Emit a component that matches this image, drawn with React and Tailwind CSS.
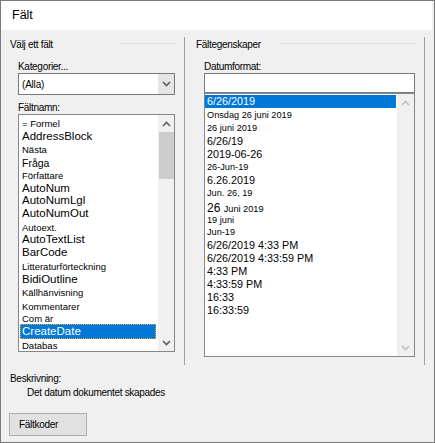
import React from "react";

const font = { fontFamily: '"Liberation Sans", Arial, sans-serif' };

const leftItems = [
  { t: "= Formel", h: 13, s: "s" },
  { t: "AddressBlock", h: 13, s: "L" },
  { t: "Nästa", h: 14, s: "s" },
  { t: "Fråga", h: 12, s: "m" },
  { t: "Författare", h: 13, s: "s" },
  { t: "AutoNum", h: 13, s: "L" },
  { t: "AutoNumLgl", h: 12, s: "L" },
  { t: "AutoNumOut", h: 14, s: "L" },
  { t: "Autoext.", h: 13, s: "s" },
  { t: "AutoTextList", h: 12, s: "L" },
  { t: "BarCode", h: 14, s: "L" },
  { t: "Litteraturförteckning", h: 13, s: "s" },
  { t: "BidiOutline", h: 13, s: "L" },
  { t: "Källhänvisning", h: 14, s: "s" },
  { t: "Kommentarer", h: 13, s: "s" },
  { t: "Com är", h: 11, s: "s" },
  { t: "CreateDate", h: 15, s: "L", sel: true },
  { t: "Databas", h: 14, s: "s" },
];

const rightItems = [
  { t: "6/26/2019", h: 13, s: "L", sel: true },
  { t: "Onsdag 26 juni 2019", h: 15, s: "s" },
  { t: "26 juni 2019", h: 12, s: "s" },
  { t: "6/26/19", h: 12, s: "L" },
  { t: "2019-06-26", h: 14, s: "L" },
  { t: "26-Jun-19", h: 13, s: "s" },
  { t: "6.26.2019", h: 13, s: "L" },
  { t: "Jun. 26, 19", h: 13, s: "s" },
  { t: "26 Juni 2019", h: 14, s: "mix" },
  { t: "19 juni", h: 13, s: "s" },
  { t: "Jun-19", h: 12, s: "s" },
  { t: "6/26/2019 4:33 PM", h: 13, s: "L" },
  { t: "6/26/2019 4:33:59 PM", h: 13, s: "L" },
  { t: "4:33 PM", h: 13, s: "L" },
  { t: "4:33:59 PM", h: 13, s: "L" },
  { t: "16:33", h: 13, s: "L" },
  { t: "16:33:59", h: 13, s: "L" },
];

const Chevron = ({ up, color = "#606060" }) => (
  <svg width="9" height="6" viewBox="0 0 9 6">
    <polyline
      points={up ? "1,5 4.5,1.5 8,5" : "1,1 4.5,4.5 8,1"}
      fill="none"
      stroke={color}
      strokeWidth="1.6"
    />
  </svg>
);

const leftSize = (s) =>
  s === "L" ? "text-[11.5px]" : s === "m" ? "text-[10.5px]" : "text-[9.5px]";

const rightSize = (s) => (s === "L" ? "text-[10.8px]" : "text-[9.2px]");

export default function App() {
  return (
    <div
      className="w-[435px] h-[443px] bg-[#f0f0f0] border border-[#7a7a7a] flex flex-col text-black overflow-hidden"
      style={font}
    >
      {/* title */}
      <div className="h-[29px] bg-white mr-[2px] pl-[11px] flex items-center text-[12.5px]">
        Fält
      </div>

      <div className="flex pt-[7px]">
        {/* left group */}
        <div className="w-[184px] h-[328px] border-r border-[#a0a0a0] flex flex-col">
          <div className="h-[14px] pl-[9px] pr-[9px] flex items-center text-[10px] tracking-[-0.3px]">
            <span>Välj ett fält</span>
            <div className="ml-auto w-[54px] h-px bg-[#dadada] mb-[1px]" />
          </div>
          <div className="pl-[17px] flex flex-col">
            <div className="mt-[8px] h-[14px] flex items-center text-[10px] tracking-[-0.3px]">
              Kategorier...
            </div>
            <div className="w-[157px] h-[22px] border border-[#7a7a7a] bg-white flex">
              <div className="flex-1 flex items-center pl-[3px] text-[10px] tracking-[-0.2px]">(Alla)</div>
              <div className="w-[16px] bg-[#e5e5e5] flex items-center justify-center">
                <Chevron />
              </div>
            </div>
            <div className="mt-[5px] h-[14px] flex items-center text-[10px] tracking-[-0.3px]">
              Fältnamn:
            </div>
            <div className="w-[157px] h-[238px] border border-[#828790] bg-white flex overflow-hidden">
              <div className="flex-1 pt-[2px] flex flex-col overflow-hidden">
                {leftItems.map((it) => (
                  <div key={it.t} className="shrink-0 flex" style={{ height: it.h }}>
                    <div
                      className={
                        it.sel
                          ? "ml-[1px] w-[136px] bg-[#0078d7] text-white border border-dotted border-[#e8a33a] flex items-center pl-[1px]"
                          : "ml-[1px] flex items-center pl-[2px]"
                      }
                    >
                      <span className={`${leftSize(it.s)} leading-none whitespace-nowrap`}>{it.t}</span>
                    </div>
                  </div>
                ))}
              </div>
              <div className="w-[16px] bg-[#f0f0f0] flex flex-col items-center">
                <div className="h-[17px] flex items-center justify-center">
                  <Chevron up />
                </div>
                <div className="w-[15px] h-[47px] bg-[#cdcdcd]" />
                <div className="flex-1" />
                <div className="h-[17px] flex items-center justify-center">
                  <Chevron />
                </div>
              </div>
            </div>
          </div>
        </div>

        {/* right group */}
        <div className="w-[240px] h-[328px] border-r border-[#a0a0a0] flex flex-col">
          <div className="h-[14px] pl-[11px] pr-[9px] flex items-center text-[10px] tracking-[-0.3px]">
            <span>Fältegenskaper</span>
            <div className="ml-auto w-[135px] h-px bg-[#dadada] mb-[1px]" />
          </div>
          <div className="pl-[19px] flex flex-col">
            <div className="mt-[8px] h-[14px] flex items-center text-[10px] tracking-[-0.3px]">
              Datumformat:
            </div>
            <div className="w-[211px] h-[20px] border border-[#7a7a7a] bg-white" />
            <div className="w-[211px] h-[264px] border border-[#828790] bg-white flex overflow-hidden">
              <div className="flex-1 pt-px flex flex-col overflow-hidden">
                {rightItems.map((it) => (
                  <div key={it.t} className="shrink-0 flex" style={{ height: it.h }}>
                    <div
                      className={
                        it.sel
                          ? "w-[191px] bg-[#0078d7] text-white flex items-center pl-[2px]"
                          : "flex items-center pl-[2px]"
                      }
                    >
                      {it.s === "mix" ? (
                        <span className="leading-none whitespace-nowrap">
                          <span className="text-[12px]">26 </span>
                          <span className="text-[9.2px]">Juni 2019</span>
                        </span>
                      ) : (
                        <span className={`${rightSize(it.s)} leading-none whitespace-nowrap`}>{it.t}</span>
                      )}
                    </div>
                  </div>
                ))}
              </div>
              <div className="w-[17px] bg-[#f0f0f0] flex flex-col items-center">
                <div className="h-[17px] flex items-center justify-center">
                  <Chevron up color="#c0c0c0" />
                </div>
                <div className="flex-1" />
                <div className="h-[17px] flex items-center justify-center">
                  <Chevron color="#c0c0c0" />
                </div>
              </div>
            </div>
          </div>
        </div>
      </div>

      {/* description */}
      <div className="mt-[6px] h-[14px] pl-[9px] flex items-center text-[10px] tracking-[-0.3px]">
        Beskrivning:
      </div>
      <div className="h-[15px] pl-[26px] flex items-center text-[10px] tracking-[-0.3px]">
        Det datum dokumentet skapades
      </div>
      <div className="mt-[13px] ml-[8px] w-[78px] h-[23px] border border-[#adadad] bg-[#e1e1e1] flex items-center pl-[9px] text-[10px] tracking-[-0.3px]">
        Fältkoder
      </div>
    </div>
  );
}
